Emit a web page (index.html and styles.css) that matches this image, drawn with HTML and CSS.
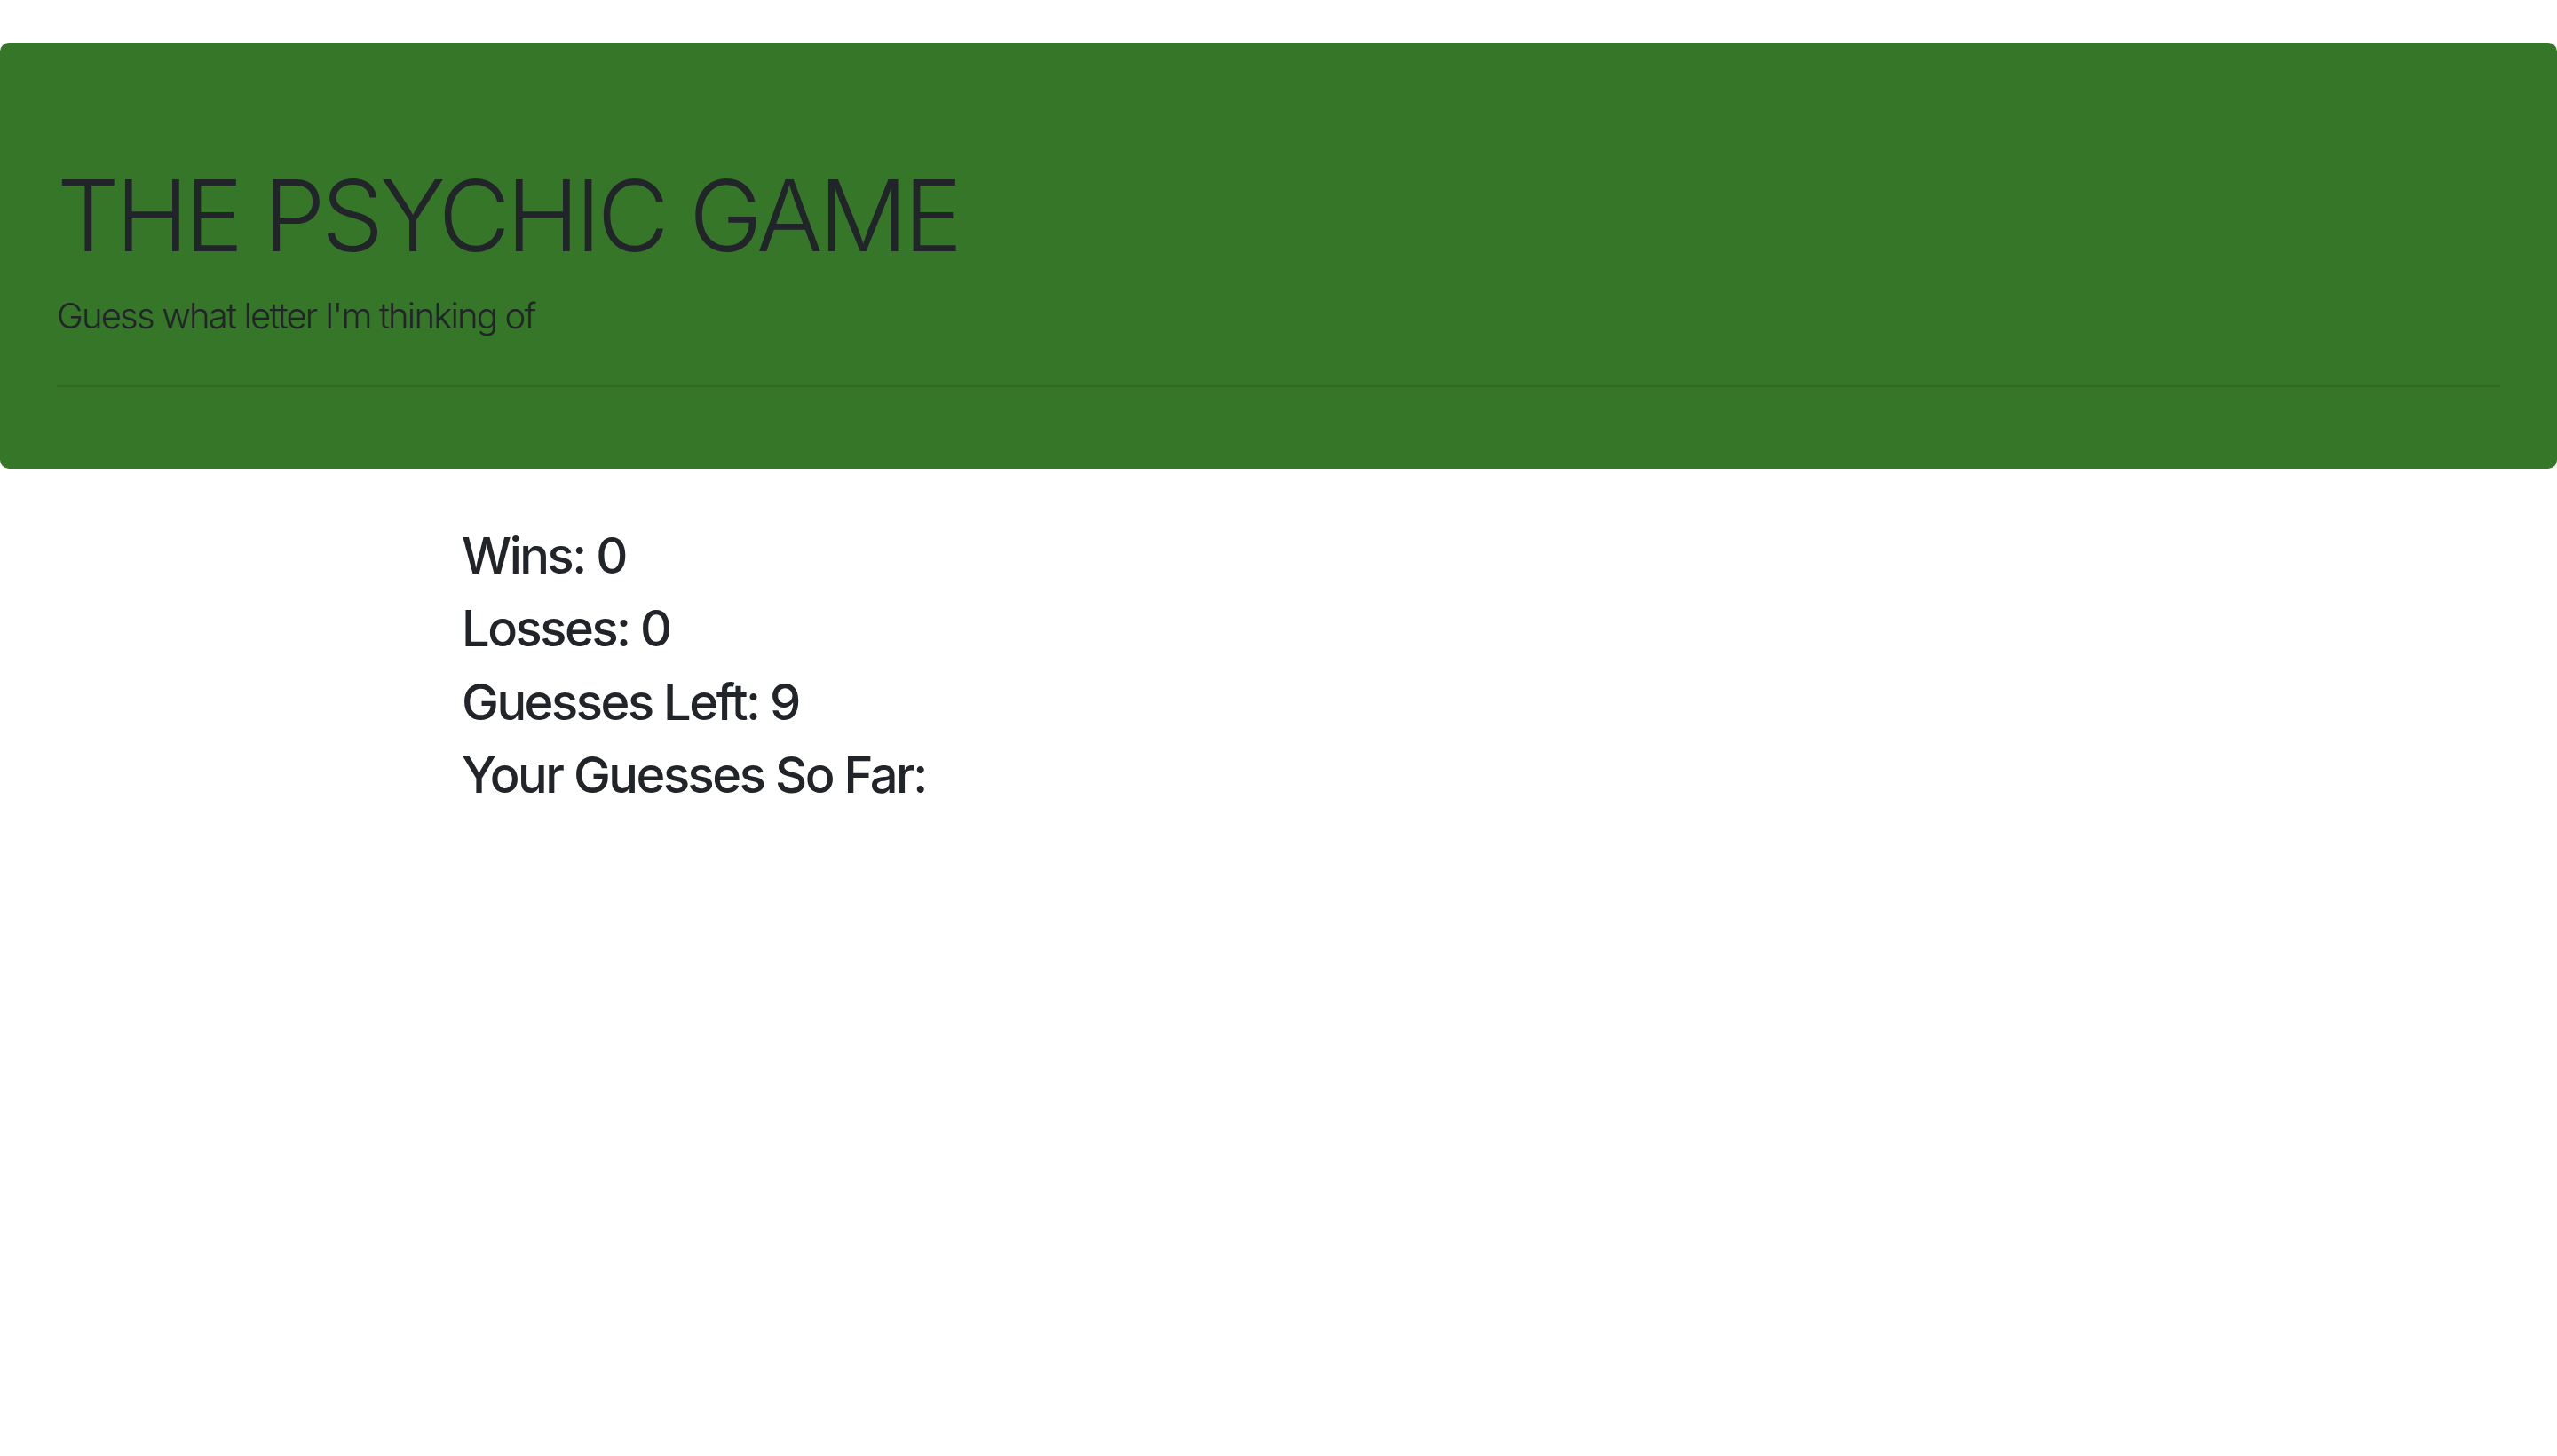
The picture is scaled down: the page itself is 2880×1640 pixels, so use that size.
FILE: index.html
```html
<!DOCTYPE html>
<html lang="en">
<head>
<meta charset="utf-8">
<title>The Psychic Game</title>
<link rel="stylesheet" href="styles.css">
</head>
<body>
<header class="jumbotron">
  <h1 class="display">THE PSYCHIC GAME</h1>
  <p class="lead">Guess what letter I'm thinking of</p>
  <hr class="divider">
</header>
<main class="stats">
  <h3 class="stat">Wins: 0</h3>
  <h3 class="stat">Losses: 0</h3>
  <h3 class="stat">Guesses Left: 9</h3>
  <h3 class="stat">Your Guesses So Far:</h3>
</main>
</body>
</html>
```

FILE: styles.css
```css
html, body {
  margin: 0;
  padding: 0;
  background: #ffffff;
}
body {
  font-family: Inter, "Liberation Sans", sans-serif;
  color: #212529;
  padding-top: 48px;
}
.jumbotron {
  background: #367628;
  border-radius: 10px;
  padding: 128px 64px 92px;
  margin: 0 0 65px;
}
.display {
  margin: 0 0 17px;
  font-size: 111px;
  font-weight: 300;
  line-height: 1.2;
  letter-spacing: -0.039em;
}
.lead {
  margin: 0;
  font-size: 40px;
  font-weight: 300;
  line-height: 1.5;
  letter-spacing: -0.045em;
}
.divider {
  margin: 48px 0 0;
  border: 0;
  border-top: 2px solid rgba(0, 0, 0, 0.1);
  height: 0;
}
.stats {
  padding-left: 520px;
}
.stat {
  margin: 0 0 15px;
  font-size: 56px;
  font-weight: 500;
  line-height: 1.2;
  letter-spacing: -0.044em;
}
```
